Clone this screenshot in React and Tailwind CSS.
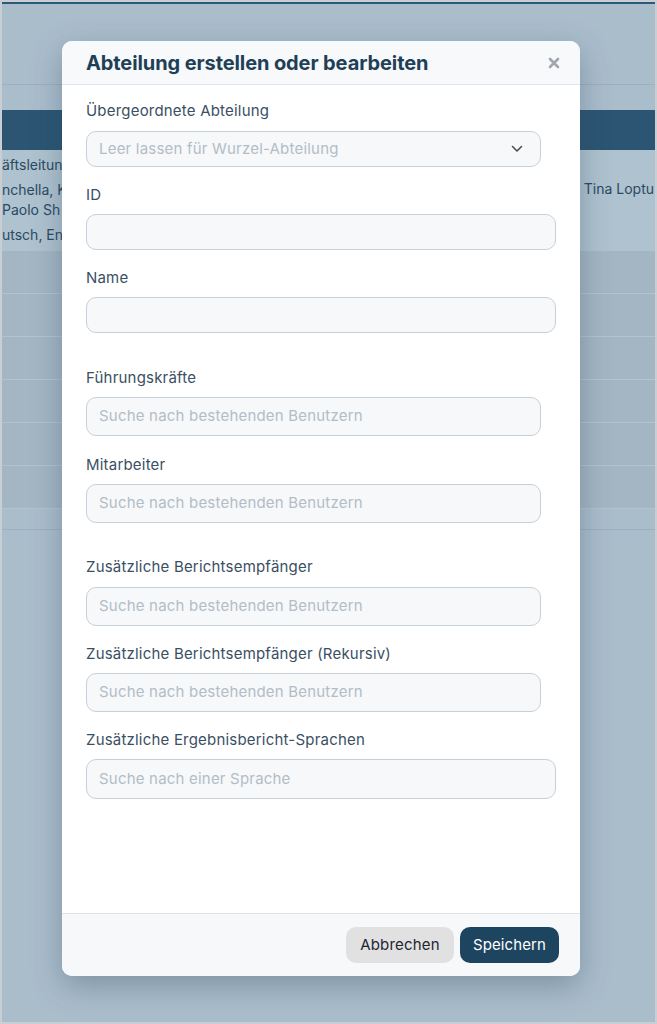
import React from "react";

const font = { fontFamily: "Inter, 'Noto Sans', 'Liberation Sans', sans-serif" };

function Field({ label, placeholder, wide, gap, select, h = "h-[36px]", inputGap = "mt-[9px]" }) {
  return (
    <div className={gap}>
      <div className="h-5 text-[15px] leading-5 tracking-[0.2px] text-[#3b4f63]">{label}</div>
      <div
        className={`${inputGap} ${h} flex items-center justify-between rounded-[10px] border border-[#c6d0d8] bg-[#f6f8fa] pl-[12px] pr-[16px] ${
          wide ? "w-[470px]" : "w-[455px]"
        }`}
      >
        <span className="text-[15px] tracking-[0.2px] text-[#b3bdc7]">{placeholder}</span>
        {select && (
          <svg width="12" height="8" viewBox="0 0 12 8" fill="none" className="mr-[1px]">
            <path d="M1.5 1.5 6 6l4.5-4.5" stroke="#4a4f55" strokeWidth="1.6" strokeLinecap="round" strokeLinejoin="round" />
          </svg>
        )}
      </div>
    </div>
  );
}

export default function App() {
  return (
    <div
      className="relative h-[1024px] w-[657px] overflow-hidden border-2 border-[#c9ced2] bg-[#aabdcb]"
      style={font}
    >
      {/* page behind the dialog */}
      <div className="flex flex-col">
        <div className="h-[2px] bg-[#2d5878]" />
        <div className="h-[81px] border-b border-[#9cb1c0]" />
        <div className="h-[25px]" />
        <div className="h-[40px] bg-[#2b5572]" />
        <div className="h-[101px] bg-[#afc2cf] text-[14px] text-[#2a4a62]">
          <div className="flex h-full justify-between">
            <div className="flex flex-col pt-[3px] leading-[23px]">
              <span>äftsleitung</span>
              <span className="mt-[4px] leading-[20px]">nchella, K</span>
              <span className="leading-[20px]">Paolo Sh</span>
              <span className="mt-[3px]">utsch, En</span>
            </div>
            <div className="whitespace-nowrap pr-[1px] pt-[28px]">Tina Loptu</div>
          </div>
        </div>
        {[0, 1, 2, 3, 4, 5].map((i) => (
          <div key={i} className="h-[43px] border-b border-[#b3c4d0] bg-[#a4b6c3]" />
        ))}
        <div className="h-[21px] border-b border-[#9cb0bf] bg-[#aabdcb]" />
      </div>

      {/* dialog */}
      <div className="absolute left-[60px] top-[39px] flex h-[935px] w-[518px] flex-col overflow-hidden rounded-[10px] bg-white shadow-[0_10px_30px_rgba(40,70,95,0.35)]">
        <div className="flex h-[44px] shrink-0 items-center justify-between border-b border-[#dfe5ea] bg-[#f7f9fa] pl-[24px] pr-[20px]">
          <h2 className="text-[20px] font-bold tracking-[-0.1px] text-[#1f3f57]">Abteilung erstellen oder bearbeiten</h2>
          <svg width="12" height="12" viewBox="0 0 12 12">
            <path d="M2 2l8 8M10 2l-8 8" stroke="#a0a8ae" strokeWidth="2.6" strokeLinecap="round" />
          </svg>
        </div>
        <div className="flex-1 px-[24px] pt-[16px]">
          <Field label="Übergeordnete Abteilung" placeholder="Leer lassen für Wurzel-Abteilung" select inputGap="mt-[10px]" />
          <Field label="ID" placeholder="" wide gap="mt-[18px]" />
          <Field label="Name" placeholder="" wide gap="mt-[18px]" />
          <Field label="Führungskräfte" placeholder="Suche nach bestehenden Benutzern" gap="mt-[35px]" h="h-[39px]" />
          <Field label="Mitarbeiter" placeholder="Suche nach bestehenden Benutzern" gap="mt-[19px]" h="h-[39px]" />
          <Field label="Zusätzliche Berichtsempfänger" placeholder="Suche nach bestehenden Benutzern" gap="mt-[34px]" h="h-[39px]" inputGap="mt-[10px]" />
          <Field label="Zusätzliche Berichtsempfänger (Rekursiv)" placeholder="Suche nach bestehenden Benutzern" gap="mt-[18px]" h="h-[39px]" />
          <Field label="Zusätzliche Ergebnisbericht-Sprachen" placeholder="Suche nach einer Sprache" wide gap="mt-[18px]" h="h-[40px]" />
        </div>
        <div className="flex h-[63px] shrink-0 items-center justify-end gap-[6px] border-t border-[#dfe3e7] bg-[#f7f8fa] pr-[21px]">
          <button className="h-[36px] w-[108px] rounded-[10px] bg-[#e1e1e1] text-[15px] tracking-[0.2px] text-[#1d2630]">Abbrechen</button>
          <button className="h-[36px] w-[99px] rounded-[10px] bg-[#1e4560] text-[15px] tracking-[0.1px] text-white">Speichern</button>
        </div>
      </div>
    </div>
  );
}
